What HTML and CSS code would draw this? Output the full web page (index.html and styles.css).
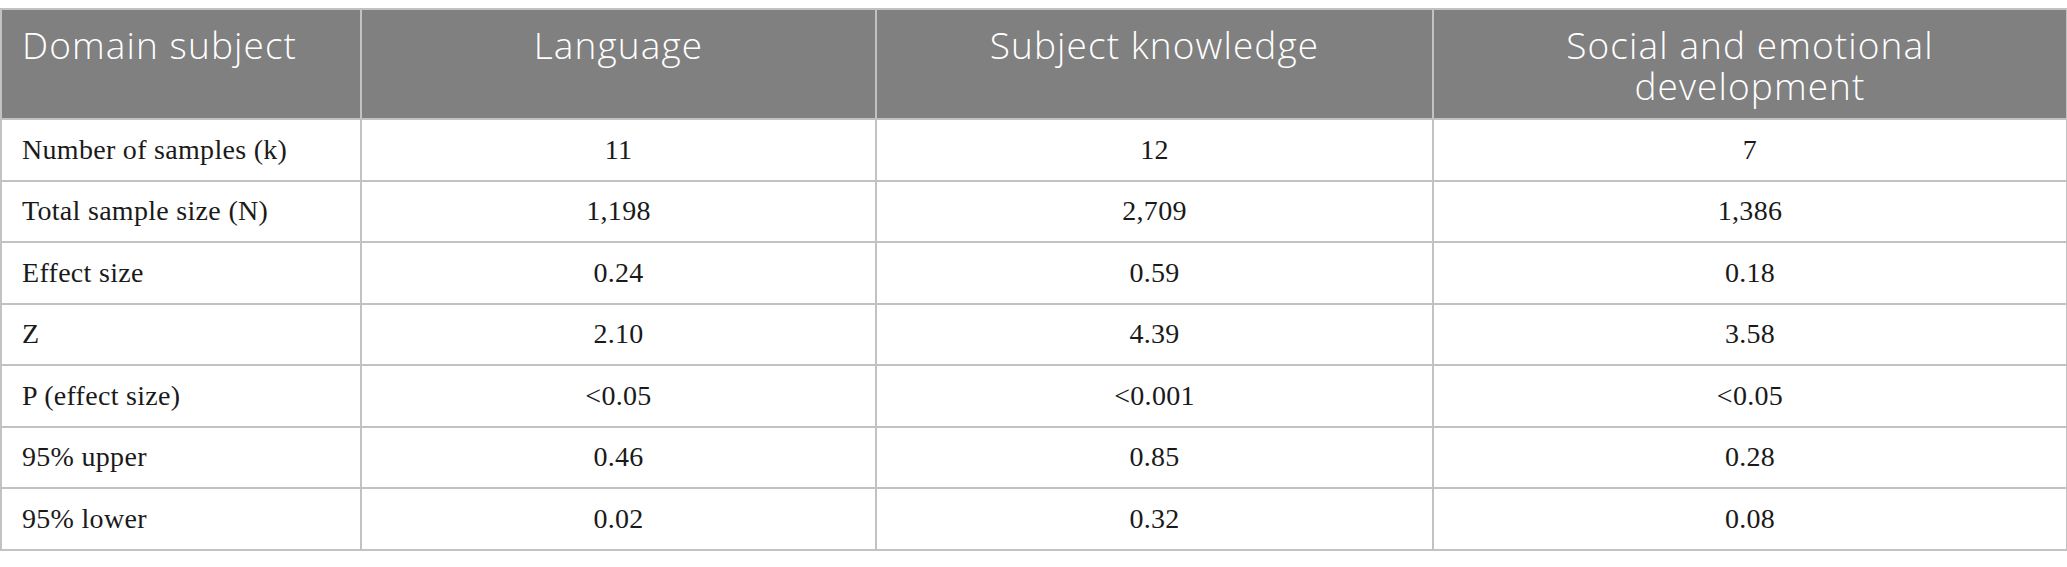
FILE: index.html
```html
<!DOCTYPE html>
<html lang="en">
<head>
<meta charset="utf-8">
<title>Domain subject table</title>
<link rel="stylesheet" href="styles.css">
</head>
<body>
<table class="data-table">
  <colgroup>
    <col class="col-label">
    <col class="col-lang">
    <col class="col-subj">
    <col class="col-soc">
  </colgroup>
  <thead>
    <tr class="head-row">
      <th class="label">Domain subject</th>
      <th>Language</th>
      <th>Subject knowledge</th>
      <th>Social and emotional<br>development</th>
    </tr>
  </thead>
  <tbody>
    <tr><td class="label">Number of samples (k)</td><td>11</td><td>12</td><td>7</td></tr>
    <tr><td class="label">Total sample size (N)</td><td>1,198</td><td>2,709</td><td>1,386</td></tr>
    <tr><td class="label">Effect size</td><td>0.24</td><td>0.59</td><td>0.18</td></tr>
    <tr><td class="label">Z</td><td>2.10</td><td>4.39</td><td>3.58</td></tr>
    <tr><td class="label">P (effect size)</td><td>&lt;0.05</td><td>&lt;0.001</td><td>&lt;0.05</td></tr>
    <tr><td class="label">95% upper</td><td>0.46</td><td>0.85</td><td>0.28</td></tr>
    <tr><td class="label">95% lower</td><td>0.02</td><td>0.32</td><td>0.08</td></tr>
  </tbody>
</table>
</body>
</html>
```

FILE: styles.css
```css
html, body {
  margin: 0;
  padding: 0;
  background: #ffffff;
}

body {
  padding-top: 8px;
}

.data-table {
  width: 2066px;
  border-collapse: collapse;
  table-layout: fixed;
  border: 2px solid #c2c2c2;
}

.col-label { width: 360px; }
.col-lang { width: 515px; }
.col-subj { width: 557px; }
.col-soc { width: 634px; }

.data-table th,
.data-table td {
  border: 2px solid #c2c2c2;
  text-align: center;
}

.data-table th {
  background: #7f807f;
  color: #ffffff;
  font-family: "Open Sans", "Noto Sans", sans-serif;
  font-weight: 300;
  font-size: 37px;
  letter-spacing: 1.1px;
  line-height: 41px;
  vertical-align: top;
  padding: 14px 20px 0;
  height: 110px;
  box-sizing: border-box;
}

.data-table td {
  color: #1a1a1a;
  font-family: "Liberation Serif", "Times New Roman", serif;
  font-size: 28px;
  letter-spacing: 0.3px;
  height: 61.5px;
  padding: 0 20px;
  box-sizing: border-box;
  vertical-align: middle;
}

.data-table .label {
  text-align: left;
}
```
